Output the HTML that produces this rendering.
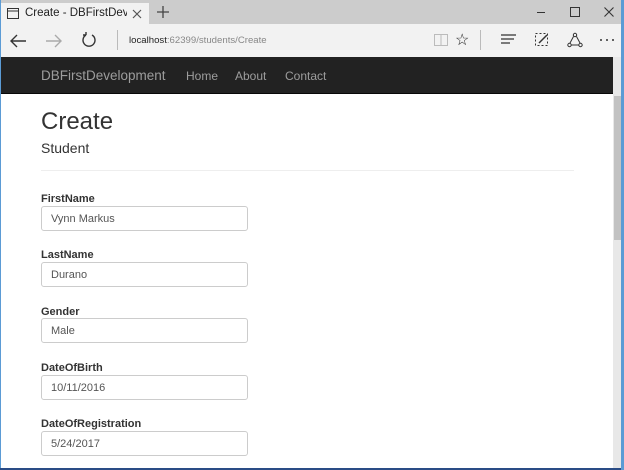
<!DOCTYPE html>
<html><head><meta charset="utf-8"><style>
*{margin:0;padding:0;box-sizing:border-box}
body{width:624px;height:470px;overflow:hidden;background:#2a4c86;font-family:"Liberation Sans",Arial,sans-serif;position:relative}
.win{position:absolute;left:0;top:0;width:621px;height:468px;background:#fff;border-left:1px solid #5b9bd5}
.rb{position:absolute;left:621px;top:0;width:3px;height:470px;background:#5b9bd5}
.tabs{position:absolute;left:0;top:0;width:621px;height:24px;background:#cccccc}
.tab{position:absolute;left:0;top:3px;width:148px;height:21px;background:#f2f2f2;font-size:12px;color:#222;white-space:nowrap;overflow:hidden}
.addr{position:absolute;left:0;top:24px;width:621px;height:33px;background:#f2f2f2}
.nav{position:absolute;left:0;top:57px;width:612px;height:37px;background:#222;border-bottom:1px solid #080808}
.nav span{position:absolute;top:12px;font-size:12px;color:#9d9d9d}
.sb{position:absolute;left:612px;top:57px;width:9px;height:411px;background:#e8e8e8}
.thumb{position:absolute;left:613px;top:96px;width:7px;height:144px;background:#c2c2c2}
h1{position:absolute;left:40px;top:108px;font-size:24px;font-weight:normal;color:#333}
h4{position:absolute;left:40px;top:140px;font-size:14px;font-weight:normal;color:#333}
hr{position:absolute;left:40px;top:170px;width:533px;border:0;border-top:1px solid #eee}
label{position:absolute;left:40px;font-size:11px;font-weight:bold;color:#333}
.in{position:absolute;left:40px;width:207px;height:25px;border:1px solid #ccc;border-radius:3px;font-size:11px;color:#555;padding:6px 9px}
</style></head><body>
<div class="win">
<div class="tabs">
<div class="tab">
<svg style="position:absolute;left:6px;top:5px" width="12" height="11"><rect x="0.5" y="0.5" width="11" height="10" fill="none" stroke="#333"/><line x1="0" y1="3" x2="12" y2="3" stroke="#333"/></svg>
<span style="position:absolute;left:24px;top:4px;font-size:11.5px;width:102px;overflow:hidden">Create - DBFirstDevelop</span>
<svg style="position:absolute;left:131px;top:6px" width="10" height="10"><path d="M1 1l8 8M9 1L1 9" stroke="#555" stroke-width="1.2"/></svg>
</div>
<svg style="position:absolute;left:156px;top:6px" width="12" height="12"><path d="M6 0v12M0 6h12" stroke="#444" stroke-width="1.3"/></svg>
<div style="position:absolute;left:536px;top:12px;width:8px;height:1px;background:#333"></div>
<svg style="position:absolute;left:569px;top:7px" width="10" height="10"><rect x="0.5" y="0.5" width="9" height="9" fill="none" stroke="#333"/></svg>
<svg style="position:absolute;left:603px;top:7px" width="10" height="10"><path d="M0.5 0.5l9 9M9.5 0.5l-9 9" stroke="#333" stroke-width="1.1"/></svg>
</div>
<div class="addr">
<svg style="position:absolute;left:8px;top:9px" width="18" height="16"><path d="M17 8H2M8 2L2 8l6 6" fill="none" stroke="#333" stroke-width="1.4"/></svg>
<svg style="position:absolute;left:44px;top:9px" width="18" height="16"><path d="M1 8h15M10 2l6 6-6 6" fill="none" stroke="#aaa" stroke-width="1.4"/></svg>
<svg style="position:absolute;left:80px;top:8px" width="16" height="17"><path d="M5 3A6 6 0 1 0 11 3M5 3V0M5 3H2" fill="none" stroke="#333" stroke-width="1.4"/></svg>
<div style="position:absolute;left:116px;top:6px;width:1px;height:20px;background:#bbb"></div>
<span style="position:absolute;left:128px;top:11px;font-size:9.6px;color:#222">localhost<span style="color:#888">:62399/students/Create</span></span>
<svg style="position:absolute;left:433px;top:9px" width="14" height="14"><rect x="0.5" y="1.5" width="13" height="11" fill="none" stroke="#bbb"/><line x1="7" y1="1" x2="7" y2="13" stroke="#bbb"/></svg>
<span style="position:absolute;left:454px;top:6px;font-size:16px;color:#222">☆</span>
<div style="position:absolute;left:479px;top:6px;width:1px;height:20px;background:#bbb"></div>
<svg style="position:absolute;left:500px;top:10px" width="16" height="12"><path d="M0 1h15M0 5h13M0 9h9" stroke="#333" stroke-width="1.2"/></svg>
<svg style="position:absolute;left:533px;top:8px" width="16" height="16"><rect x="1.5" y="1.5" width="12" height="12" fill="none" stroke="#333" stroke-dasharray="2 2"/><path d="M5 11L13 3" stroke="#333" stroke-width="1.5"/></svg>
<svg style="position:absolute;left:566px;top:8px" width="16" height="16"><circle cx="8" cy="3" r="1.7" fill="none" stroke="#333"/><circle cx="2.5" cy="13" r="1.7" fill="none" stroke="#333"/><circle cx="13.5" cy="13" r="1.7" fill="none" stroke="#333"/><path d="M6.5 4.5L3 11M9.5 4.5L13 11M4 13h8" fill="none" stroke="#333"/></svg>
<svg style="position:absolute;left:598px;top:14px" width="16" height="4"><circle cx="2" cy="2" r="1" fill="#333"/><circle cx="8" cy="2" r="1" fill="#333"/><circle cx="14" cy="2" r="1" fill="#333"/></svg>
</div>
<div class="nav">
<span style="left:40px;top:11px;font-size:13.5px">DBFirstDevelopment</span>
<span style="left:185px">Home</span><span style="left:234px">About</span><span style="left:284px">Contact</span>
</div>
<div class="sb"></div><div class="thumb"></div>
<h1>Create</h1><h4>Student</h4><hr>
<label style="top:193px">FirstName</label><div class="in" style="top:206px">Vynn Markus</div>
<label style="top:249px">LastName</label><div class="in" style="top:262px">Durano</div>
<label style="top:306px">Gender</label><div class="in" style="top:318px">Male</div>
<label style="top:362px">DateOfBirth</label><div class="in" style="top:375px">10/11/2016</div>
<label style="top:418px">DateOfRegistration</label><div class="in" style="top:431px">5/24/2017</div>
</div>
<div class="rb"></div>
</body></html>
